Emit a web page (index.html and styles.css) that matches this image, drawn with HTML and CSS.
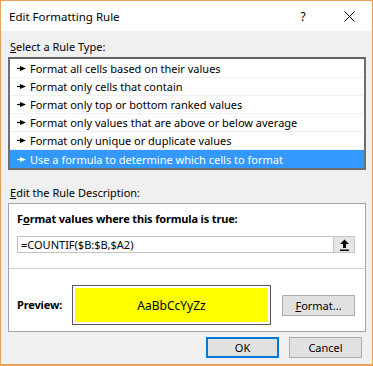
FILE: index.html
```html
<!DOCTYPE html>
<html>
<head>
<meta charset="utf-8">
<link rel="stylesheet" href="styles.css">
</head>
<body>
<div class="window">
  <div class="titlebar">
    <span class="title">Edit Formatting Rule</span>
    <span class="help">?</span>
    <span class="close"><svg width="11" height="11" viewBox="0 0 11 11"><path d="M0.5 0.5L10.5 10.5M10.5 0.5L0.5 10.5" stroke="#000" stroke-width="1" fill="none"/></svg></span>
  </div>
  <div class="content">
    <div class="label"><u>S</u>elect a Rule Type:</div>
    <div class="listbox">
      <div class="row"><svg class="bullet" width="9" height="5" viewBox="0 0 9 5"><path d="M0 2.5H4" stroke="currentColor" stroke-width="1.2"/><path d="M3 0L9 2.5L3 5Z" fill="currentColor"/></svg>Format all cells based on their values</div>
      <div class="row"><svg class="bullet" width="9" height="5" viewBox="0 0 9 5"><path d="M0 2.5H4" stroke="currentColor" stroke-width="1.2"/><path d="M3 0L9 2.5L3 5Z" fill="currentColor"/></svg>Format only cells that contain</div>
      <div class="row"><svg class="bullet" width="9" height="5" viewBox="0 0 9 5"><path d="M0 2.5H4" stroke="currentColor" stroke-width="1.2"/><path d="M3 0L9 2.5L3 5Z" fill="currentColor"/></svg>Format only top or bottom ranked values</div>
      <div class="row"><svg class="bullet" width="9" height="5" viewBox="0 0 9 5"><path d="M0 2.5H4" stroke="currentColor" stroke-width="1.2"/><path d="M3 0L9 2.5L3 5Z" fill="currentColor"/></svg>Format only values that are above or below average</div>
      <div class="row"><svg class="bullet" width="9" height="5" viewBox="0 0 9 5"><path d="M0 2.5H4" stroke="currentColor" stroke-width="1.2"/><path d="M3 0L9 2.5L3 5Z" fill="currentColor"/></svg>Format only unique or duplicate values</div>
      <div class="row selected"><svg class="bullet" width="9" height="5" viewBox="0 0 9 5"><path d="M0 2.5H4" stroke="currentColor" stroke-width="1.2"/><path d="M3 0L9 2.5L3 5Z" fill="currentColor"/></svg>Use a formula to determine which cells to format</div>
    </div>
    <div class="label label2"><u>E</u>dit the Rule Description:</div>
    <div class="descbox">
      <div class="upper">
        <div class="bold">F<u>o</u>rmat values where this formula is true:</div>
        <div class="input">
          <span class="formula">=COUNTIF($B:$B,$A2)</span>
          <span class="refbtn"><svg width="11" height="12" viewBox="0 0 11 12"><path d="M5.5 0.5L1 5H4V9H7V5H10Z" fill="#000"/><rect x="1" y="10.5" width="9" height="1.5" fill="#000"/></svg></span>
        </div>
      </div>
      <div class="lower">
        <div class="bold preview-label">Preview:</div>
        <div class="preview"><div class="sample">AaBbCcYyZz</div></div>
        <div class="btn format"><u>F</u>ormat...</div>
      </div>
    </div>
    <div class="buttons">
      <div class="btn ok">OK</div>
      <div class="btn cancel">Cancel</div>
    </div>
  </div>
</div>
</body>
</html>
```

FILE: styles.css
```css
* { box-sizing: border-box; }
html, body { margin: 0; padding: 0; }
body {
  font-family: "Noto Sans", "Segoe UI", sans-serif;
  font-size: 11px;
  color: #000;
  background: #fff;
}
.window {
  width: 373px;
  height: 366px;
  border: 1px solid #e8a155;
  border-bottom-width: 2px;
  background: #f0f0f0;
  display: flex;
  flex-direction: column;
}
.titlebar {
  height: 30px;
  background: #fff;
  display: flex;
  align-items: center;
  padding-left: 8px;
  flex-shrink: 0;
}
.title {
  font-size: 11.5px;
  flex: 1;
}
.help {
  font-size: 12px;
  width: 46px;
  text-align: center;
}
.close {
  width: 46px;
  display: flex;
  justify-content: center;
  align-items: center;
}
.content {
  padding: 8px 6px 0 7px;
  flex: 1;
  display: flex;
  flex-direction: column;
}
.label {
  line-height: 16px;
  padding-left: 2px;
  height: 16px;
}
.listbox {
  margin-top: 2px;
  background: #fff;
  border: 2px solid #6e6e6e;
  border-top-color: #646464;
  padding-top: 1px;
}
.row {
  height: 18px;
  line-height: 17px;
  display: flex;
  align-items: center;
  padding-left: 7px;
  border-bottom: 1px solid #f0f0f0;
  white-space: nowrap;
}
.row:last-child { border-bottom: none; }
.bullet {
  margin-right: 4px;
  flex-shrink: 0;
}
.selected {
  background: #3399ff;
  color: #fff;
}
.label2 { margin-top: 15px; }
.descbox {
  margin-top: 2px;
  background: #fff;
  border: 1px solid #a3a3a3;
}
.upper {
  padding: 7px 10px 15px 8px;
  border-bottom: 1px solid #d4d4d4;
}
.bold {
  font-weight: bold;
  line-height: 16px;
  letter-spacing: -0.15px;
}
.input {
  margin-top: 9px;
  height: 17px;
  border: 1px solid #c4c4c4;
  display: flex;
  align-items: center;
}
.formula {
  flex: 1;
  padding-left: 3px;
  line-height: 15px;
}
.refbtn {
  width: 21px;
  height: 15px;
  background: #e6e6e6;
  border-left: 1px solid #c4c4c4;
  display: flex;
  align-items: center;
  justify-content: center;
}
.lower {
  display: flex;
  align-items: center;
  padding: 16px 10px 6px 8px;
}
.preview-label {
  width: 55px;
}
.preview {
  width: 199px;
  height: 40px;
  border: 1px solid #5a5a5a;
  padding: 2px;
}
.sample {
  width: 100%;
  height: 100%;
  background: #ffff00;
  display: flex;
  align-items: center;
  justify-content: center;
  font-size: 12px;
}
.btn {
  height: 21px;
  background: #e1e1e1;
  border: 1px solid #adadad;
  display: flex;
  align-items: center;
  justify-content: center;
}
.format {
  width: 73px;
  margin-left: auto;
}
.buttons {
  display: flex;
  justify-content: flex-end;
  gap: 10px;
  padding-right: 4px;
  margin-top: 5px;
}
.ok, .cancel { width: 73px; }
.ok {
  border: 1px solid #0078d7;
  box-shadow: inset 0 0 0 1px #0078d7;
}
```
